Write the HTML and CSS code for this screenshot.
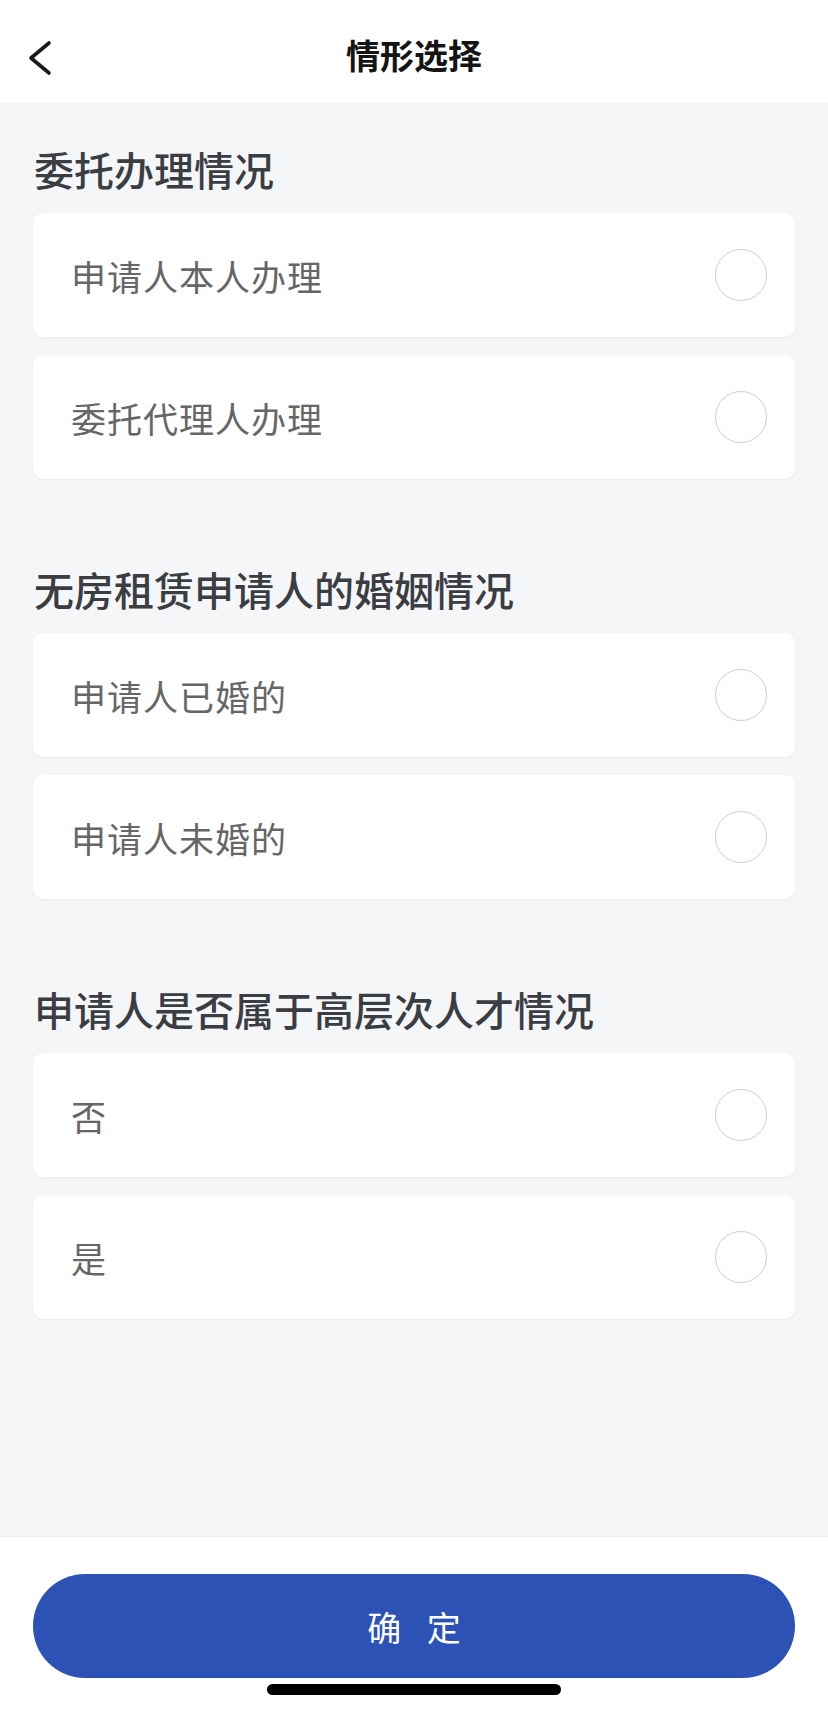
FILE: index.html
```html
<!DOCTYPE html>
<html lang="zh-CN">
<head>
<meta charset="utf-8">
<title>情形选择</title>
<link rel="stylesheet" href="styles.css">
</head>
<body>
<div class="page">
  <header class="topbar">
    <span class="back">
      <svg width="26" height="36" viewBox="0 0 26 36"><polyline points="22,3 4,18 22,33" fill="none" stroke="#1a1a1a" stroke-width="3.6" stroke-linecap="round" stroke-linejoin="round"/></svg>
    </span>
    <h1 class="title">情形选择</h1>
  </header>
  <main class="content">
    <section class="group">
      <h2 class="group-title">委托办理情况</h2>
      <div class="option"><span class="label">申请人本人办理</span><span class="radio"></span></div>
      <div class="option"><span class="label">委托代理人办理</span><span class="radio"></span></div>
    </section>
    <section class="group">
      <h2 class="group-title">无房租赁申请人的婚姻情况</h2>
      <div class="option"><span class="label">申请人已婚的</span><span class="radio"></span></div>
      <div class="option"><span class="label">申请人未婚的</span><span class="radio"></span></div>
    </section>
    <section class="group">
      <h2 class="group-title">申请人是否属于高层次人才情况</h2>
      <div class="option"><span class="label">否</span><span class="radio"></span></div>
      <div class="option"><span class="label">是</span><span class="radio"></span></div>
    </section>
  </main>
  <footer class="footer">
    <button class="confirm">确 定</button>
    <div class="home-indicator"></div>
  </footer>
</div>
</body>
</html>
```

FILE: styles.css
```css
* { box-sizing: border-box; }
html, body {
  margin: 0;
  padding: 0;
  background: #f5f6f8;
}
body {
  font-family: "Noto Sans CJK SC", "Noto Sans", sans-serif;
}
.page {
  width: 828px;
  height: 1709px;
  display: flex;
  flex-direction: column;
  overflow: hidden;
}
.topbar {
  height: 102px;
  background: #ffffff;
  display: flex;
  align-items: center;
  justify-content: center;
  position: relative;
  flex-shrink: 0;
}
.back {
  position: absolute;
  left: 27px;
  top: 40px;
  display: flex;
}
.title {
  margin: 0;
  font-size: 34px;
  font-weight: 700;
  color: #141414;
  line-height: 1;
  margin-top: 8px;
}
.content {
  flex: 1;
  background: #f5f6f8;
  padding: 39px 33px 0;
}
.group {
  display: flex;
  flex-direction: column;
  gap: 18px;
  margin-bottom: 82px;
}
.group-title {
  margin: 0 0 -2px;
  font-size: 40px;
  font-weight: 500;
  color: #3a3d42;
  line-height: 56px;
  padding-left: 1px;
}
.option {
  height: 124px;
  background: #ffffff;
  border-radius: 10px;
  box-shadow: 0 1px 3px rgba(0, 0, 0, 0.05);
  display: flex;
  align-items: center;
  justify-content: space-between;
  padding: 0 28px 0 38px;
}
.label {
  font-size: 35px;
  color: #666666;
  letter-spacing: 1px;
}
.radio {
  width: 52px;
  height: 52px;
  border-radius: 50%;
  border: 1.5px solid #cfcfcf;
}
.footer {
  height: 173px;
  background: #ffffff;
  border-top: 1px solid #eceef1;
  flex-shrink: 0;
  display: flex;
  flex-direction: column;
  align-items: center;
  padding-top: 37px;
}
.confirm {
  width: 762px;
  height: 104px;
  border: none;
  border-radius: 52px;
  background: #2d52b6;
  color: #ffffff;
  font-family: "Noto Sans CJK SC", "Noto Sans", sans-serif;
  font-size: 34px;
  letter-spacing: 9px;
  text-indent: 9px;
  padding: 0;
}
.home-indicator {
  width: 294px;
  height: 11px;
  border-radius: 6px;
  background: #000000;
  margin-top: 6px;
}
```
